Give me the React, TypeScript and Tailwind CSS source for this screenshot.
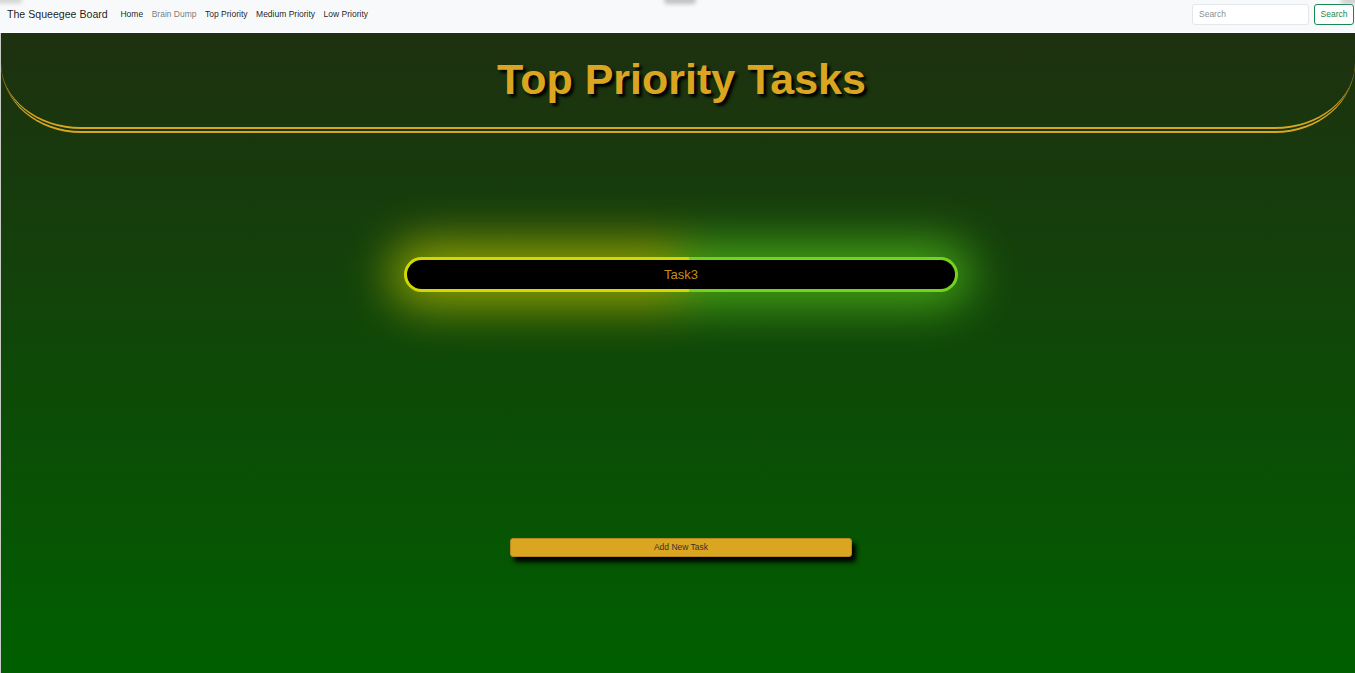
import React from "react";

const navLinks = [
  { label: "Home", muted: false },
  { label: "Brain Dump", muted: true },
  { label: "Top Priority", muted: false },
  { label: "Medium Priority", muted: false },
  { label: "Low Priority", muted: false },
];

function Navbar() {
  return (
    <nav className="relative h-[33px] bg-[#f8f9fa] border-b border-white">
      <div className="flex h-[28px] items-center pl-[7px] pr-[1px]">
        <a className="mr-[8.5px] text-[10.6px] leading-none text-[#000000e6]">The Squeegee Board</a>
        <ul className="flex items-center text-[8.5px] leading-none">
          {navLinks.map((l) => (
            <li key={l.label}>
              <a
                className={
                  l.muted
                    ? "px-[4.25px] text-[#0000008c]"
                    : "px-[4.25px] text-[#000000e6]"
                }
              >
                {l.label}
              </a>
            </li>
          ))}
        </ul>
        <form className="ml-auto flex items-center gap-[5px]">
          <input
            placeholder="Search"
            className="h-[21px] w-[117px] rounded-[3px] border border-[#e3e6ea] bg-white px-[6px] text-[8.5px] placeholder:text-[#8a9096] outline-none"
          />
          <button className="h-[21px] w-[40px] rounded-[3px] border border-[#198754] bg-white text-[8.5px] text-[#198754]">
            Search
          </button>
        </form>
      </div>
      {/* screen-capture smudges */}
      <div className="pointer-events-none absolute left-[664px] top-[-3px] h-[7px] w-[32px] rounded-full bg-[#9a9a9a] opacity-60 blur-[2px]" />
      <div className="pointer-events-none absolute left-[-4px] top-[-2px] h-[5px] w-[26px] rounded-full bg-[#b0b0b0] opacity-60 blur-[2px]" />
      <div className="pointer-events-none absolute right-[-4px] top-[-2px] h-[6px] w-[18px] rounded-full bg-[#a0a0a0] opacity-50 blur-[2px]" />
    </nav>
  );
}

function TaskPill({ name }: { name: string }) {
  return (
    <div className="relative w-[554px]">
      <div className="absolute inset-[-14px] rounded-full bg-[linear-gradient(to_right,#c8cc00_50%,#5cd01a_50%)] opacity-70 blur-[24px]" />
      <div className="relative rounded-full bg-[linear-gradient(to_right,#d2d800_51.5%,#72d41e_51.5%)] p-[3px]">
        <div className="flex h-[29px] items-center justify-center rounded-full bg-black">
          <span className="text-[13px] text-[#c4900e]">{name}</span>
        </div>
      </div>
    </div>
  );
}

export default function App() {
  return (
    <div className="min-h-[673px] bg-white font-['Liberation_Sans',Arial,sans-serif]">
      <Navbar />
      <main className="flex h-[640px] flex-col items-center border-l border-[#c8ccc4] bg-[linear-gradient(to_bottom,#1e3010,#005f00)]">
        <header className="flex h-[100px] w-full items-center justify-center rounded-b-[80px_70px] border-b-[6px] border-double border-[#daa520]">
          <h1 className="pb-[1px] pl-[7px] text-[43px] font-bold text-[#daa520] [text-shadow:3px_3px_3px_#000]">
            Top Priority Tasks
          </h1>
        </header>
        <div className="mt-[124px] pl-[6px]">
          <TaskPill name="Task3" />
        </div>
        <div className="mt-[241px] pl-[6px]">
          <button className="h-[19px] w-[342px] rounded-[3px] border border-[#b8891a] bg-[#daa520] text-[8.5px] text-[#333] shadow-[4px_5px_5px_#000]">
            Add New Task
          </button>
        </div>
      </main>
    </div>
  );
}
